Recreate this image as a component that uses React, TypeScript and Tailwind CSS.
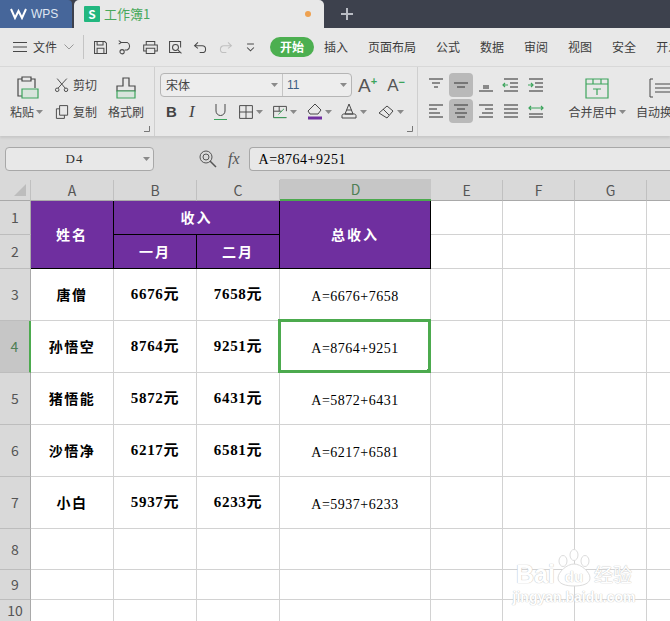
import type { ReactNode } from 'react';

const UI = "font-['Noto_Sans_CJK_SC','Liberation_Sans',sans-serif]";
const SONG = "font-['Liberation_Serif','Noto_Sans_CJK_SC',serif]";

const Ico = ({ size = 20, children, className = '' }: { size?: number; children: ReactNode; className?: string }) => (
  <svg width={size} height={size} viewBox="0 0 20 20" fill="none" stroke="#484848" strokeWidth="1.2" className={`shrink-0 ${className}`}>
    {children}
  </svg>
);

const Caret = ({ className = '' }: { className?: string }) => (
  <svg width="7" height="4" viewBox="0 0 7 4" className={`shrink-0 ${className}`}>
    <path d="M0 0h7L3.5 4z" fill="#8a8a8a" />
  </svg>
);

const Corner = () => (
  <svg width="6" height="6" viewBox="0 0 6 6" className="absolute right-1 bottom-1">
    <path d="M0 5.5h5.5V0" fill="none" stroke="#777" />
  </svg>
);

const quickIcons = [
  <><path d="M3 3h12l2 2v12H3z" /><path d="M6 3v4h7V3M6 17v-6h8v6" /></>,
  <><path d="M4 4h8a5 5 0 0 1 0 9H9" /><circle cx="6" cy="15" r="2.5" /><path d="M2 2l3 2-3 2" /></>,
  <><path d="M5 7V3h10v4M5 14H2V7h16v7h-3" /><path d="M5 11h10v6H5z" /></>,
  <><path d="M15 16H3V3h13v7" /><circle cx="10" cy="10" r="3.5" /><path d="M13 13l4 4" /></>,
];

const menuTabs = ['插入', '页面布局', '公式', '数据', '审阅', '视图', '安全', '开发工具'];

const alignIcons = [
  [[3, 17, 4], [6, 14, 8], [8, 12, 12]],
  [[3, 17, 8], [6, 14, 12]],
  [[7, 13, 11], [7, 13, 13], [3, 17, 16]],
  [[3, 17, 4], [9, 17, 8], [9, 17, 12], [3, 17, 16]],
  [[3, 17, 4], [9, 17, 8], [9, 17, 12], [3, 17, 16]],
  [[3, 17, 4], [3, 11, 8], [3, 14, 12], [3, 17, 16]],
  [[3, 17, 4], [6, 14, 8], [4, 16, 12], [6, 14, 16]],
  [[3, 17, 4], [9, 17, 8], [6, 17, 12], [3, 17, 16]],
  [[3, 17, 4], [3, 17, 8], [3, 17, 12], [3, 17, 16]],
  [[3, 17, 13], [3, 17, 16]],
];

const AlignBtn = ({ i }: { i: number }) => {
  const active = i === 1 || i === 6;
  return (
    <div className={`flex h-[24px] w-[24px] items-center justify-center rounded ${active ? 'bg-[#b9b9b9]' : ''}`}>
      <Ico>
        {alignIcons[i].map(([a, b, y]) => (
          <path key={`${a}-${y}`} d={`M${a} ${y}H${b}`} />
        ))}
        {i === 3 && <path d="M7 10H2m2-2l-2 2 2 2" stroke="#3ca45c" />}
        {i === 4 && <path d="M2 10h5m-2-2l2 2-2 2" stroke="#3ca45c" />}
        {i === 9 && <path d="M3 7h14M5 5L3 7l2 2m10-4l2 2-2 2" stroke="#3ca45c" />}
      </Ico>
    </div>
  );
};

type Row = { no: string; name: string; a: string; b: string; f: string };

const rows: Row[] = [
  { no: '3', name: '唐僧', a: '6676元', b: '7658元', f: 'A=6676+7658' },
  { no: '4', name: '孙悟空', a: '8764元', b: '9251元', f: 'A=8764+9251' },
  { no: '5', name: '猪悟能', a: '5872元', b: '6431元', f: 'A=5872+6431' },
  { no: '6', name: '沙悟净', a: '6217元', b: '6581元', f: 'A=6217+6581' },
  { no: '7', name: '小白', a: '5937元', b: '6233元', f: 'A=5937+6233' },
];

const RowHead = ({ children, active }: { children: ReactNode; active?: boolean }) => (
  <div
    className={`flex items-center justify-center border-b border-b-[#bdbdbd] text-[14px] ${UI} ${
      active ? 'border-r-2 border-r-[#4caa4e] bg-[#c6c6c6] text-[#4f7f55]' : 'border-r border-r-[#a9a9a9] bg-[#d9d9d9] text-[#555]'
    }`}
  >
    {children}
  </div>
);

const ColHead = ({ children, active }: { children: string; active?: boolean }) => (
  <div
    className={`flex items-center justify-center text-[14px] ${UI} ${
      active
        ? 'border-b-2 border-b-[#4caa4e] bg-[#c6c6c6] text-[#4f7f55]'
        : 'mt-[1px] border-r border-b border-r-[#c0c0c0] border-b-[#a9a9a9] bg-[#d9d9d9] text-[#555]'
    }`}
  >
    {children}
  </div>
);

const Cell = ({ children, className = '' }: { children?: ReactNode; className?: string }) => (
  <div className={`relative flex items-center justify-center border-r border-b border-[#d2d2d2] bg-white text-black ${className}`}>
    {children}
  </div>
);

const Blank = () => (
  <>
    <Cell />
    <Cell />
    <Cell />
    <Cell className="border-r-0" />
  </>
);

const HeadCell = ({ children, className = '' }: { children: ReactNode; className?: string }) => (
  <div className={`flex items-center justify-center border-r border-b border-black bg-[#6f2f9f] text-[14px] font-bold tracking-[2px] text-white ${UI} ${className}`}>
    {children}
  </div>
);

const Watermark = () => (
  <div className="pointer-events-none absolute top-[549px] left-[513px] flex w-[122px] flex-col items-center text-white [text-shadow:0_0_1px_#c4c4c4,0_0_1px_#c4c4c4]">
    <div className="flex items-end">
      <span className="font-['Liberation_Sans',sans-serif] text-[25px] leading-[26px] font-bold">Bai</span>
      <div className="relative ml-[1px] h-[38px] w-[36px]">
        <svg width="36" height="38" viewBox="0 0 36 38" fill="#fff" stroke="#dcdcdc">
          <ellipse cx="18" cy="6" rx="4" ry="5.500" />
          <ellipse cx="7" cy="12" rx="4" ry="5.500" />
          <ellipse cx="29" cy="12" rx="4" ry="5.500" />
          <path d="M18 15c7 0 16 8 16 14s-8 8-16 8-16-2-16-8 9-14 16-14z" />
        </svg>
        <span className="absolute right-0 bottom-[3px] left-0 text-center font-['Liberation_Sans',sans-serif] text-[15px] leading-none font-bold">du</span>
      </div>
      <span className={`ml-[2px] text-[19px] leading-[26px] ${UI}`}>经验</span>
    </div>
    <div className="mt-[1px] font-['Liberation_Sans',sans-serif] text-[14px] leading-[18px] font-bold">jingyan.baidu.com</div>
  </div>
);

export default function App() {
  return (
    <div className={`relative h-[621px] w-[670px] overflow-hidden bg-[#d9d9d9] ${UI}`}>
      {/* tab bar */}
      <div className="flex h-[28px] items-end bg-[#3d414d]">
        <div className="flex h-[28px] w-[72px] items-center gap-[4px] rounded-tr-[4px] bg-[#46669a] pl-[10px] text-[12px] text-[#dfe6f2]">
          <svg width="17" height="12" viewBox="0 0 17 12" fill="none" stroke="#fff" strokeWidth="2">
            <path d="M1 1l4 9 3.500-7 3.500 7 4-9" />
          </svg>
          <span className="font-['Liberation_Sans',sans-serif]">WPS</span>
        </div>
        <div className="ml-[2px] flex h-[28px] w-[250px] items-center rounded-t-[5px] bg-[#e8e8e8] pr-[13px] pl-[10px]">
          <div className="flex h-[16px] w-[16px] items-center justify-center rounded-[1px] bg-[#22b77f] text-[12px] leading-none font-bold text-white">S</div>
          <span className="ml-[4px] text-[13px] text-[#49a85c]">工作簿1</span>
          <div className="ml-auto h-[6px] w-[6px] rounded-full bg-[#eea150]" />
        </div>
        <svg width="14" height="14" viewBox="0 0 14 14" className="mb-[7px] ml-[16px]" stroke="#b9bcc4" strokeWidth="2">
          <path d="M7 1v12M1 7h12" />
        </svg>
      </div>

      {/* menu row */}
      <div className="flex h-[39px] items-center overflow-hidden whitespace-nowrap border-b border-b-[#d8d8d8] bg-[#e8e8e8] text-[12px] text-[#3c3c3c]">
        <svg width="14" height="10" viewBox="0 0 14 10" stroke="#484848" className="ml-[13px] shrink-0">
          <path d="M0 .5h14M0 5h14M0 9.500h14" />
        </svg>
        <span className="ml-[6px] shrink-0">文件</span>
        <svg width="10" height="6" viewBox="0 0 10 6" fill="none" stroke="#999" className="ml-[7px] shrink-0">
          <path d="M.5.5L5 5 9.500.5" />
        </svg>
        <div className="mr-[8px] ml-[9px] h-[24px] w-px shrink-0 bg-[#c4c4c4]" />
        <div className="flex shrink-0 items-center gap-[8px]">
          {quickIcons.map((icon, i) => (
            <Ico key={i} size={17}>{icon}</Ico>
          ))}
          <Ico size={17}><path d="M7 4L3 8l4 3M4 8h8a4 4 0 0 1 0 8H9" /></Ico>
          <Ico size={17}><path d="M13 4l4 4-4 3M16 8H8a4 4 0 0 0 0 8h3" stroke="#c0c0c0" /></Ico>
          <Ico size={17}><path d="M6 6h8M6 10l4 4 4-4" /></Ico>
        </div>
        <div className="ml-[11px] flex h-[20px] w-[44px] shrink-0 items-center justify-center rounded-full bg-[#4caf50] font-bold text-white">开始</div>
        <div className="ml-[10px] flex shrink-0 gap-[20px]">
          {menuTabs.map((t) => (
            <span key={t}>{t}</span>
          ))}
        </div>
      </div>

      {/* ribbon */}
      <div className="flex h-[69px] overflow-hidden whitespace-nowrap bg-[#e8e8e8] text-[12px] text-[#444] shadow-[0_2px_2px_#c8c8c8]">
        <div className="relative flex w-[155px] shrink-0 border-r border-r-[#cfcfcf]">
          <div className="ml-[10px] flex w-[38px] flex-col">
            <svg width="24" height="24" viewBox="0 0 24 24" fill="none" stroke="#484848" strokeWidth="1.2" className="mt-[9px] ml-[5px]">
              <path d="M7 3H3v17h5M16 3h4v9M7 1h9v4H7z" />
              <path d="M7 13h16v9H7z" fill="#d8e4dc" stroke="#3ca45c" />
            </svg>
            <div className="mt-[3px] flex items-center gap-[2px]">粘贴<Caret /></div>
          </div>
          <div className="ml-[6px] flex w-[54px] flex-col">
            <div className="mt-[9px] flex items-center gap-[3px]">
              <Ico size={16}><path d="M4 2l10 12M16 2L5 14" /><circle cx="4" cy="16" r="2.200" /><circle cx="15" cy="16" r="2.200" /></Ico>
              剪切
            </div>
            <div className="mt-[9px] flex items-center gap-[3px]">
              <Ico size={16}><path d="M7 2h10v12H7zM7 6H3v12h10v-4" /></Ico>
              复制
            </div>
          </div>
          <div className="flex flex-col items-center">
            <svg width="24" height="24" viewBox="0 0 24 24" fill="none" stroke="#484848" strokeWidth="1.2" className="mt-[9px]">
              <path d="M9 2h6v8h6v5H3v-5h6z" />
              <path d="M3 15h18v7H3z" fill="#d8e4dc" stroke="#3ca45c" />
            </svg>
            <div className="mt-[3px]">格式刷</div>
          </div>
          <Corner />
        </div>

        <div className="relative flex w-[263px] shrink-0 flex-col border-r border-r-[#cfcfcf] pl-[5px]">
          <div className="mt-[6px] flex items-center">
            <div className="flex h-[24px] w-[192px] rounded-[4px] border border-[#b5b5b5] bg-[#ededed] text-[12px]">
              <div className="flex w-[122px] items-center justify-between border-r border-r-[#c5c5c5] pr-[4px] pl-[5px]">
                <span>宋体</span>
                <Caret />
              </div>
              <div className="flex flex-1 items-center justify-between pr-[4px] pl-[4px] font-['Liberation_Sans',sans-serif] text-[#3d5f86]">
                <span>11</span>
                <Caret />
              </div>
            </div>
            <div className="ml-[6px] flex items-start font-['Liberation_Sans',sans-serif] text-[19px] leading-none text-[#555]">
              A<span className="text-[11px] leading-none font-bold text-[#3ca45c]">+</span>
            </div>
            <div className="ml-[10px] flex items-start font-['Liberation_Sans',sans-serif] text-[17px] leading-none text-[#555]">
              A<span className="text-[11px] leading-none font-bold text-[#3ca45c]">−</span>
            </div>
          </div>
          <div className="mt-[6px] flex items-center">
            <span className="ml-[6px] w-[23px] font-['Liberation_Sans',sans-serif] text-[15px] leading-none font-bold text-[#444]">B</span>
            <span className="w-[25px] font-['Liberation_Serif',serif] text-[17px] leading-none text-[#444] italic">I</span>
            <div className="mr-[10px] flex h-[16px] w-[13px] flex-col items-center justify-between">
              <svg width="11" height="12" viewBox="0 0 11 12" fill="none" stroke="#484848"><path d="M1 0v7a4.500 4.500 0 0 0 9 0V0" /></svg>
              <div className="h-px w-[13px] bg-[#3ca45c]" />
            </div>
            <Ico size={16} className="ml-[1px]"><path d="M2 2h16v16H2zM10 2v16M2 10h16" /></Ico>
            <Caret className="mr-[9px] ml-[2px]" />
            <Ico size={16}><path d="M18 9V3H2v14h16M2 9h10M9 3v6" /><path d="M8 13l7-7M2 17h16" stroke="#3ca45c" /></Ico>
            <Caret className="mr-[10px] ml-[2px]" />
            <svg width="16" height="17" viewBox="0 0 16 17" fill="none" stroke="#484848">
              <path d="M8 1l6 6-3 4H3L1 8z" />
              <path d="M1 15h14" stroke="#7030a0" strokeWidth="3" />
            </svg>
            <Caret className="mr-[9px] ml-[2px]" />
            <svg width="16" height="17" viewBox="0 0 16 17" fill="none" stroke="#484848">
              <path d="M8 1l4 10H4zM5.500 7h5M1 12.500c0-1 1-1.500 2-1.500h10c1 0 2 .5 2 1.500v2.500H1z" />
            </svg>
            <Caret className="mr-[11px] ml-[3px]" />
            <svg width="16" height="14" viewBox="0 0 16 14" fill="none" stroke="#484848">
              <path d="M9 1l6 5-6 7-8-5z" />
              <path d="M5 4l6 6" />
            </svg>
            <Caret className="ml-[3px]" />
          </div>
          <Corner />
        </div>

        <div className="mt-[6px] ml-[6px] grid h-[50px] shrink-0 grid-cols-[repeat(5,25px)] grid-rows-2 gap-y-[2px]">
          {alignIcons.map((_, i) => (
            <AlignBtn key={i} i={i} />
          ))}
        </div>

        <div className="ml-[19px] flex w-[58px] shrink-0 flex-col items-center">
          <svg width="24" height="21" viewBox="0 0 24 21" fill="none" stroke="#3ca45c" strokeWidth="1.200" className="mt-[11px]">
            <path d="M1 1h22v19H1zM1 6h22M8 1v5M16 1v5M8 11h8M12 11v6" />
          </svg>
          <div className="mt-[4px] flex items-center gap-[2px]">合并居中<Caret /></div>
        </div>
        <div className="ml-[10px] flex shrink-0 flex-col items-start">
          <svg width="24" height="21" viewBox="0 0 24 21" fill="none" stroke="#484848" className="mt-[11px] ml-[13px]">
            <path d="M4 1H1v18h3M6 6h18M6 10h18M6 14h18" />
          </svg>
          <div className="mt-[4px]">自动换行</div>
        </div>
      </div>

      {/* formula bar */}
      <div className="flex h-[43px] items-center pt-[2px]">
        <div className={`ml-[5px] flex h-[24px] w-[149px] items-center rounded-[4px] border border-[#a8a8a8] bg-[#e8e8e8] pt-[1px] pr-[3px] text-[13px] tracking-[1px] text-[#333] ${SONG}`}>
          <span className="flex-1 text-center">D4</span>
          <Caret />
        </div>
        <svg width="18" height="18" viewBox="0 0 18 18" fill="none" stroke="#555" className="ml-[45px]">
          <circle cx="7" cy="7" r="6" />
          <circle cx="7" cy="7" r="3" />
          <path d="M11 11l6 6" strokeWidth="1.500" />
        </svg>
        <span className="ml-[11px] font-['Liberation_Serif',serif] text-[16px] text-[#555] italic">fx</span>
        <div className={`ml-[9px] flex h-[24px] flex-1 items-center rounded-l-[4px] border border-r-0 border-[#a8a8a8] bg-[#e8e8e8] pt-[2px] pl-[9px] text-[14px] tracking-[0.5px] text-black ${SONG}`}>
          A=8764+9251
        </div>
      </div>

      {/* sheet */}
      <div className="grid grid-cols-[31px_83px_83px_83px_151px_72px_72px_72px_1fr] grid-rows-[22px_34px_34px_52px_52px_52px_52px_52px_41px_30px_22px]">
        <div className="mt-[1px] flex items-end justify-end border-r border-b border-r-[#c0c0c0] border-b-[#a9a9a9] bg-[#d9d9d9] p-[4px]">
          <svg width="12" height="12" viewBox="0 0 12 12"><path d="M12 0v12H0z" fill="#bdbdbd" /></svg>
        </div>
        <ColHead>A</ColHead>
        <ColHead>B</ColHead>
        <ColHead>C</ColHead>
        <ColHead active>D</ColHead>
        <ColHead>E</ColHead>
        <ColHead>F</ColHead>
        <ColHead>G</ColHead>
        <div className="mt-[1px] border-b border-b-[#a9a9a9] bg-[#d9d9d9]" />

        <RowHead>1</RowHead>
        <HeadCell className="row-span-2">姓名</HeadCell>
        <HeadCell className="col-span-2">收入</HeadCell>
        <HeadCell className="row-span-2">总收入</HeadCell>
        <Blank />

        <RowHead>2</RowHead>
        <HeadCell>一月</HeadCell>
        <HeadCell>二月</HeadCell>
        <Blank />

        {rows.map((r) => (
          <div key={r.no} className="contents">
            <RowHead active={r.no === '4'}>{r.no}</RowHead>
            <Cell className={`text-[14px] font-bold tracking-[1.500px] ${UI}`}>{r.name}</Cell>
            <Cell className={`text-[15px] font-bold tracking-[0.700px] ${SONG}`}>{r.a}</Cell>
            <Cell className={`text-[15px] font-bold tracking-[0.700px] ${SONG}`}>{r.b}</Cell>
            <Cell className={`pt-[3px] text-[14px] tracking-[0.5px] ${SONG}`}>
              {r.f}
              {r.no === '4' && (
                <div className="absolute -top-[2px] -right-[1px] -bottom-[1px] -left-[2px] border-[3px] border-[#4caa4e]">
                  <div className="absolute -right-[4px] -bottom-[4px] h-[5px] w-[5px] bg-[#4caa4e]" />
                </div>
              )}
            </Cell>
            <Blank />
          </div>
        ))}

        {['8', '9', '10'].map((n) => (
          <div key={n} className="contents">
            <RowHead>{n}</RowHead>
            <Cell />
            <Cell />
            <Cell />
            <Cell />
            <Blank />
          </div>
        ))}
      </div>

      <Watermark />
    </div>
  );
}
